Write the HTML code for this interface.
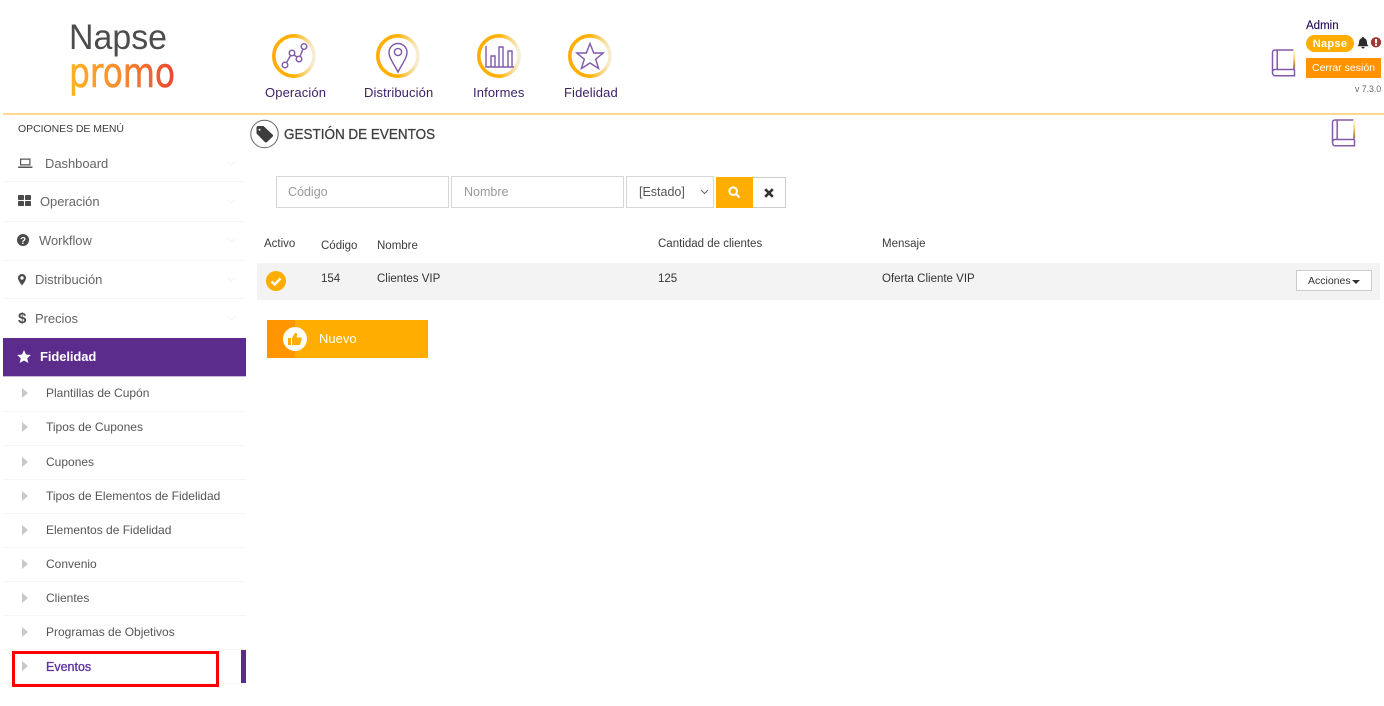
<!DOCTYPE html>
<html lang="es"><head><meta charset="utf-8"><title>Gestión de eventos</title>
<style>
html,body{margin:0;padding:0;background:#fff;width:1384px;height:706px;overflow:hidden}
body{position:relative;font-family:"Liberation Sans",sans-serif;color:#444}
.t{position:absolute;white-space:nowrap;line-height:16px;height:16px}
.b{position:absolute}
svg{position:absolute;overflow:visible}
.top{font-size:13px;color:#3a1f66;letter-spacing:.12px}
.m{font-size:13px;color:#666;letter-spacing:-.05px}
.s{font-size:12px;color:#555}
.h{font-size:11.5px;color:#3c3c3c}
.sep{position:absolute;left:3px;width:243px;height:1px;background:#f5f5f5}
.arrow{position:absolute;left:22px;width:0;height:0;border-left:6px solid #c8c8c8;border-top:5px solid transparent;border-bottom:5px solid transparent}
.inp{position:absolute;box-sizing:border-box;border:1.5px solid #d6d6d6;background:#fff;height:32px;top:176px}
</style></head><body>
<svg width="0" height="0" style="left:0;top:0"><defs>
<linearGradient id="ring" x1="0" x2="1" y1="0" y2="0"><stop offset="0" stop-color="#ffae00"/><stop offset=".5" stop-color="#ffb000"/><stop offset="1" stop-color="#f6efdc"/></linearGradient>
<linearGradient id="promo" x1="0" x2="1" y1="0" y2="0"><stop offset="0" stop-color="#ffb41e"/><stop offset=".5" stop-color="#f8892f"/><stop offset="1" stop-color="#e8472f"/></linearGradient>
<linearGradient id="bk" x1="0" x2="0" y1="0" y2="1"><stop offset="0" stop-color="#fffbe8"/><stop offset=".5" stop-color="#f5d468"/><stop offset="1" stop-color="#a8743a"/></linearGradient>
</defs></svg>

<!-- logo -->
<svg style="left:60px;top:15px" width="130" height="90">
<text x="9" y="34" font-family="'Liberation Sans',sans-serif" font-size="35" fill="#4d4d4d" textLength="98" lengthAdjust="spacingAndGlyphs">Napse</text>
<text x="9" y="72" font-family="'DejaVu Sans',sans-serif" font-size="41" fill="url(#promo)" stroke="url(#promo)" stroke-width=".6" textLength="106" lengthAdjust="spacingAndGlyphs">promo</text>
</svg>

<!-- top nav -->
<svg style="left:272px;top:34px" width="44" height="46" fill="none">
<circle cx="22" cy="22" r="20.2" stroke="url(#ring)" stroke-width="3.6"/>
<g stroke="#8058ab" stroke-width="1.4"><circle cx="13" cy="31" r="2.8"/><circle cx="20" cy="19" r="2.8"/><circle cx="27" cy="25" r="2.8"/><circle cx="32" cy="12.500" r="2.8"/><path d="M14.500 28.600L18.600 21.400M22.200 20.900L25 23.200M28 22.500L31 15"/></g></svg>
<svg style="left:376px;top:34px" width="44" height="46" fill="none">
<circle cx="22" cy="22" r="20.2" stroke="url(#ring)" stroke-width="3.6"/>
<g stroke="#8058ab" stroke-width="1.4"><path d="M22 38C18 30 13 24 13 18.500a9 9 0 0 1 18 0C31 24 26 30 22 38Z"/><circle cx="22" cy="18" r="3.600"/></g></svg>
<svg style="left:477px;top:34px" width="44" height="46" fill="none">
<circle cx="22" cy="22" r="20.2" stroke="url(#ring)" stroke-width="3.6"/>
<g stroke="#8058ab" stroke-width="1.4"><path d="M9 12V33H37"/><path d="M14 33V22H18V33M22 33V13H26V33M31 33V17H35V33"/></g></svg>
<svg style="left:568px;top:34px" width="44" height="46" fill="none">
<circle cx="22" cy="22" r="20.2" stroke="url(#ring)" stroke-width="3.6"/>
<path d="M22 9.500L25.700 19H35.200L27.700 25.200L30.600 34.500L22 29L13.400 34.500L16.300 25.200L8.800 19H18.300Z" stroke="#8058ab" stroke-width="1.4"/></svg>
<span class="t top" style="left:265px;top:85px">Operación</span>
<span class="t top" style="left:364px;top:85px">Distribución</span>
<span class="t top" style="left:473px;top:85px">Informes</span>
<span class="t top" style="left:564px;top:85px">Fidelidad</span>

<!-- user -->
<span class="t" style="left:1306px;top:18px;font-size:11.500px;color:#2a0f5a;-webkit-text-stroke:.15px #2a0f5a">Admin</span>
<div class="b" style="left:1306px;top:35px;width:48px;height:17px;border-radius:9px;background:#ffae00;color:#fff;font-size:11px;font-weight:bold;text-align:center;line-height:18px;letter-spacing:.3px">Napse</div>
<svg style="left:1357px;top:37px" width="12" height="12"><path d="M6 0C6.800 0 7.300 .6 7.300 1.200C9.300 1.800 10 3.600 10 5.500C10 7.500 10.700 8.200 11.500 9.200H.5C1.300 8.200 2 7.500 2 5.500C2 3.600 2.700 1.800 4.700 1.200C4.700 .6 5.200 0 6 0ZM4.400 9.900H7.600A1.600 1.600 0 0 1 4.400 9.900Z" fill="#2b2b2b"/></svg>
<svg style="left:1371px;top:37px" width="11" height="11"><circle cx="5" cy="5.300" r="5.200" fill="#a33a35"/><rect x="4" y="2" width="2" height="4.300" fill="#fff"/><rect x="4" y="7" width="2" height="1.700" fill="#fff"/></svg>
<div class="b" style="left:1306px;top:58px;width:75px;height:20px;background:#ff9400;color:#fff;font-size:10.500px;text-align:center;line-height:20px">Cerrar sesión</div>
<span class="t" style="left:1355px;top:81px;font-size:8.800px;color:#666;letter-spacing:-.05px">v 7.3.0</span>

<svg style="left:1271px;top:49px" width="26" height="28" fill="none"><path d="M23 18V20.500H4C2.500 20.500 1.500 21.500 1.500 23.500C1.500 25.500 2.500 26.800 4 26.800H23.500V20.500M23 1H4C2.500 1 1.500 2 1.500 3.500V23.500M6.200 1V20.500" stroke="#8558a8" stroke-width="1.500"/><rect x="22.200" y="0.500" width="2" height="18" fill="url(#bk)"/></svg>
<svg style="left:1331px;top:119px" width="26" height="28" fill="none"><path d="M23 18V20.500H4C2.500 20.500 1.500 21.500 1.500 23.500C1.500 25.500 2.500 26.800 4 26.800H23.500V20.500M23 1H4C2.500 1 1.500 2 1.500 3.500V23.500M6.200 1V20.500" stroke="#8558a8" stroke-width="1.500"/><rect x="22.200" y="0.500" width="2" height="18" fill="url(#bk)"/></svg>

<div class="b" style="left:3px;top:113px;width:1381px;height:2px;background:#ffd98f"></div>

<!-- sidebar -->
<span class="t" style="left:18px;top:121px;font-size:10.500px;color:#3c3c3c;letter-spacing:-.05px">OPCIONES DE MENÚ</span>
<svg style="left:18px;top:158px" width="15" height="11" fill="#555"><path d="M2 0.500H12.500V7.500H2ZM3.200 1.700V6.300H11.300V1.700ZM0 8.500H14.500V9.200C14.500 9.700 14 10 13.500 10H1C.5 10 0 9.700 0 9.200Z" fill-rule="evenodd"/></svg>
<span class="t m" style="left:45px;top:156px">Dashboard</span>
<svg style="left:18px;top:195px" width="13" height="11" fill="#4a4a4a"><rect width="6" height="5" rx=".8"/><rect x="7" width="6" height="5" rx=".8"/><rect y="6" width="6" height="5" rx=".8"/><rect x="7" y="6" width="6" height="5" rx=".8"/></svg>
<span class="t m" style="left:40px;top:194px">Operación</span>
<svg style="left:17px;top:234px" width="12" height="12"><circle cx="6" cy="6" r="6" fill="#4a4a4a"/><text x="6" y="9.800" font-size="10" font-weight="bold" text-anchor="middle" fill="#fff" font-family="Liberation Sans">?</text></svg>
<span class="t m" style="left:39px;top:233px">Workflow</span>
<svg style="left:18px;top:274px" width="8" height="12"><path d="M4 0A4 4 0 0 1 8 4C8 6.500 5 10 4 11.500C3 10 0 6.500 0 4A4 4 0 0 1 4 0ZM4 2.300A1.700 1.700 0 1 0 4 5.700A1.700 1.700 0 1 0 4 2.300Z" fill="#4a4a4a" fill-rule="evenodd"/></svg>
<span class="t m" style="left:35px;top:272px">Distribución</span>
<span class="t" style="left:18px;top:310px;font-size:15px;font-weight:bold;color:#4a4a4a;height:18px;line-height:18px">$</span>
<span class="t m" style="left:35px;top:311px">Precios</span>
<div class="sep" style="top:181px"></div><div class="sep" style="top:221px"></div><div class="sep" style="top:260px"></div><div class="sep" style="top:298px"></div>
<svg style="left:227px;top:160px" width="10" height="165" fill="none" stroke="#f3f3f3" stroke-width="1"><path d="M.5 1.500L4.500 5L8.500 1.500M.5 39.500L4.500 43L8.500 39.500M.5 78.500L4.500 82L8.500 78.500M.5 117.500L4.500 121L8.500 117.500M.5 156L4.500 159.500L8.500 156"/></svg>
<div class="b" style="left:3px;top:338px;width:243px;height:39px;background:#5b2c8b;border-bottom:1px solid #c9b8dc;box-sizing:border-box"></div>
<svg style="left:17px;top:350px" width="14" height="13"><path d="M7 0L9 4.500L13.800 5L10.200 8.200L11.300 13L7 10.500L2.700 13L3.800 8.200L.2 5L5 4.500Z" fill="#fff"/></svg>
<span class="t" style="left:40px;top:349px;font-size:13px;font-weight:bold;color:#fff;letter-spacing:-.1px">Fidelidad</span>

<i class="arrow" style="top:388px"></i><span class="t s" style="left:46px;top:385px">Plantillas de Cupón</span>
<i class="arrow" style="top:422px"></i><span class="t s" style="left:46px;top:419px">Tipos de Cupones</span>
<i class="arrow" style="top:457px"></i><span class="t s" style="left:46px;top:454px">Cupones</span>
<i class="arrow" style="top:491px"></i><span class="t s" style="left:46px;top:488px">Tipos de Elementos de Fidelidad</span>
<i class="arrow" style="top:525px"></i><span class="t s" style="left:46px;top:522px">Elementos de Fidelidad</span>
<i class="arrow" style="top:559px"></i><span class="t s" style="left:46px;top:556px">Convenio</span>
<i class="arrow" style="top:593px"></i><span class="t s" style="left:46px;top:590px">Clientes</span>
<i class="arrow" style="top:627px"></i><span class="t s" style="left:46px;top:624px">Programas de Objetivos</span>
<i class="arrow" style="top:661px"></i><span class="t s" style="left:46px;top:659px;color:#5e35a0;font-size:12.500px;-webkit-text-stroke:.35px #5e35a0">Eventos</span>
<div class="sep" style="top:411px"></div><div class="sep" style="top:445px"></div><div class="sep" style="top:479px"></div><div class="sep" style="top:513px"></div><div class="sep" style="top:547px"></div><div class="sep" style="top:581px"></div><div class="sep" style="top:615px"></div><div class="sep" style="top:649px"></div><div class="sep" style="top:683px"></div>
<div class="b" style="left:241px;top:650px;width:5px;height:33px;background:#5b2c8b"></div>
<div class="b" style="left:12px;top:651px;width:207px;height:36px;box-sizing:border-box;border:3px solid #f00"></div>

<!-- title -->
<svg style="left:250px;top:119px" width="30" height="31"><circle cx="14.500" cy="15" r="13.700" fill="#fff" stroke="#666" stroke-width="1"/><path d="M6.500 8.500C6.500 7.500 7.300 7 8 7H13.500L22.500 15.500C23.200 16.200 23.200 17 22.500 17.800L17 23C16.300 23.700 15.500 23.700 14.800 23L6.500 14.500ZM9.500 9.700A1 1 0 1 0 9.501 11.700A1 1 0 1 0 9.500 9.700Z" fill="#3d3d3d" fill-rule="evenodd"/></svg>
<span class="t" style="left:284px;top:127px;font-size:14.500px;color:#3f3f3f;-webkit-text-stroke:.3px #3f3f3f;transform:scaleX(.93);transform-origin:0 0">GESTIÓN DE EVENTOS</span>

<!-- filters -->
<div class="inp" style="left:276px;width:173px"></div><span class="t" style="left:288px;top:184px;font-size:12.500px;color:#999">Código</span>
<div class="inp" style="left:451px;width:173px"></div><span class="t" style="left:464px;top:184px;font-size:12.500px;color:#999">Nombre</span>
<div class="inp" style="left:626px;width:88px;border-width:1px"></div><span class="t" style="left:639px;top:184px;font-size:12.500px;color:#555">[Estado]</span>
<svg style="left:700px;top:189px" width="9" height="6" fill="none" stroke="#666" stroke-width="1"><path d="M1 1L4.500 4.500L8 1"/></svg>
<div class="b" style="left:716px;top:177px;width:37px;height:31px;background:#ffae00"></div>
<svg style="left:728px;top:186px" width="13" height="13" fill="none" stroke="#fff" stroke-width="2"><circle cx="5.200" cy="5.200" r="3.800"/><path d="M8 8L11.500 11.500"/></svg>
<div class="b" style="left:753px;top:177px;width:33px;height:31px;box-sizing:border-box;border:1px solid #ccc;border-left:0"></div>
<svg style="left:764px;top:188px" width="10" height="10" stroke="#333" stroke-width="2.600"><path d="M1.200 1.200L8.800 8.800M8.800 1.200L1.200 8.800"/></svg>

<!-- table -->
<span class="t h" style="left:264px;top:236px">Activo</span>
<span class="t h" style="left:321px;top:238px">Código</span>
<span class="t h" style="left:377px;top:238px">Nombre</span>
<span class="t h" style="left:658px;top:236px">Cantidad de clientes</span>
<span class="t h" style="left:882px;top:236px">Mensaje</span>
<div class="b" style="left:257px;top:263px;width:1123px;height:37px;background:#f3f3f3"></div>
<svg style="left:266px;top:271px" width="20" height="20"><circle cx="10" cy="10" r="10" fill="#ffae00"/><path d="M5.500 10.500L8.700 13.500L14.500 7.500" fill="none" stroke="#fff" stroke-width="2.400"/></svg>
<span class="t h" style="left:321px;top:271px;color:#333">154</span>
<span class="t h" style="left:377px;top:271px;color:#333">Clientes VIP</span>
<span class="t h" style="left:658px;top:271px;color:#333">125</span>
<span class="t h" style="left:882px;top:271px;color:#333">Oferta Cliente VIP</span>
<div class="b" style="left:1296px;top:270px;width:76px;height:21px;box-sizing:border-box;border:1px solid #ccc;background:#fff"></div>
<span class="t" style="left:1308px;top:273px;font-size:10.500px;color:#333">Acciones</span>
<div class="b" style="left:1352px;top:280px;width:0;height:0;border-top:4px solid #333;border-left:4px solid transparent;border-right:4px solid transparent"></div>

<!-- nuevo -->
<div class="b" style="left:267px;top:320px;width:161px;height:38px;background:#ffae00"></div>
<div class="b" style="left:267px;top:320px;width:28px;height:38px;background:#ff9500"></div>
<div class="b" style="left:283px;top:327px;width:24px;height:24px;border-radius:50%;background:#fff"></div>
<svg style="left:288px;top:332px" width="14" height="14" fill="#ffae00"><rect x="0" y="6" width="3" height="7"/><path d="M4 6L7 1C8.500 .5 9.200 1.500 9 3L8.500 5.500H12.500C13.500 5.500 14 6.500 13.500 7.500L12 12.500C11.800 13 11.300 13 11 13H4Z"/></svg>
<span class="t" style="left:319px;top:331px;font-size:13px;color:#fff">Nuevo</span>
</body></html>
